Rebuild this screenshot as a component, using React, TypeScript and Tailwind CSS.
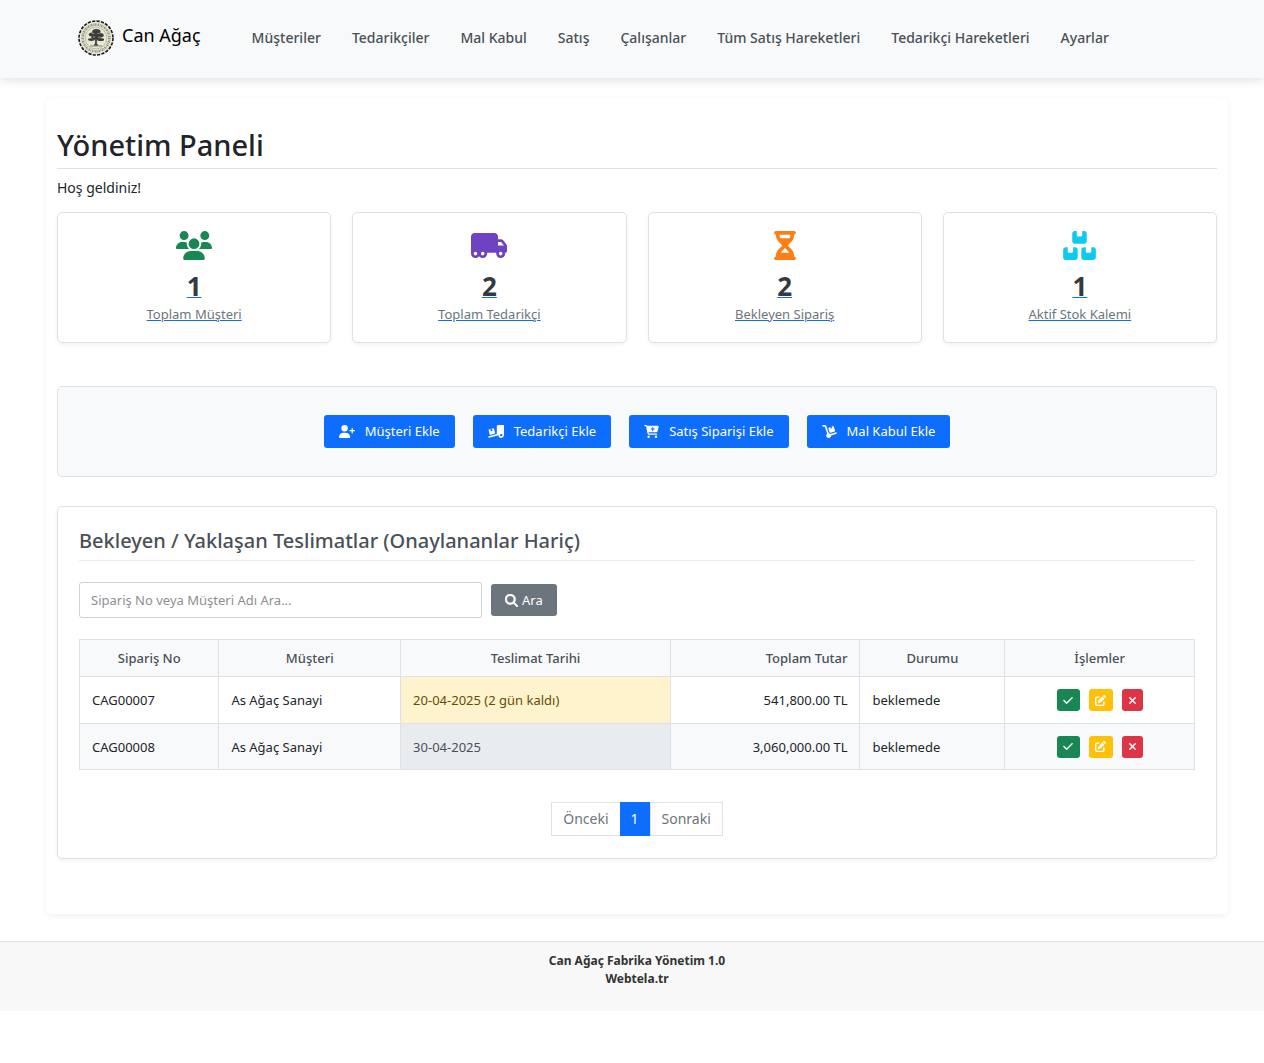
import React from "react";
import {
  FaCartPlus,
  FaCheck,
  FaDolly,
  FaHourglassHalf,
  FaMagnifyingGlass,
  FaPenToSquare,
  FaTruckMoving,
  FaTruckRampBox,
  FaUserPlus,
  FaUsers,
  FaXmark,
} from "react-icons/fa6";
import { clsx } from "clsx";

const boxShape =
  "h32v80c0 9 7 16 16 16h64c9 0 16-7 16-16v-80h32a48 48 0 0 1 48 48v128a48 48 0 0 1-48 48h-160a48 48 0 0 1-48-48v-128a48 48 0 0 1 48-48z";

// Three separate boxes, one on top of two
const BoxesIcon = ({ className }: { className?: string }) => (
  <svg viewBox="0 0 576 512" fill="currentColor" className={className} aria-hidden="true">
    <path d={`M208 0${boxShape}`} />
    <path d={`M48 288${boxShape}`} />
    <path d={`M368 288${boxShape}`} />
  </svg>
);

const navItems = [
  "Müşteriler",
  "Tedarikçiler",
  "Mal Kabul",
  "Satış",
  "Çalışanlar",
  "Tüm Satış Hareketleri",
  "Tedarikçi Hareketleri",
  "Ayarlar",
];

const stats = [
  { label: "Toplam Müşteri", value: 1, icon: FaUsers, iconClass: "w-9 text-[#198754]" },
  { label: "Toplam Tedarikçi", value: 2, icon: FaTruckMoving, iconClass: "w-9 text-[#6f42c1]" },
  { label: "Bekleyen Sipariş", value: 2, icon: FaHourglassHalf, iconClass: "w-[22px] text-[#fd7e14]" },
  { label: "Aktif Stok Kalemi", value: 1, icon: BoxesIcon, iconClass: "w-[33px] text-[#0dcaf0]" },
];

const quickActions = [
  { label: "Müşteri Ekle", icon: FaUserPlus, iconClass: "w-4" },
  { label: "Tedarikçi Ekle", icon: FaTruckRampBox, iconClass: "w-4" },
  { label: "Satış Siparişi Ekle", icon: FaCartPlus, iconClass: "w-[15px]" },
  { label: "Mal Kabul Ekle", icon: FaDolly, iconClass: "w-[15px]" },
];

const orders = [
  {
    no: "CAG00007",
    customer: "As Ağaç Sanayi",
    date: "20-04-2025 (2 gün kaldı)",
    total: "541,800.00 TL",
    status: "beklemede",
    soon: true,
  },
  {
    no: "CAG00008",
    customer: "As Ağaç Sanayi",
    date: "30-04-2025",
    total: "3,060,000.00 TL",
    status: "beklemede",
    soon: false,
  },
];

// Round seal with a tree in the middle
const Logo = () => (
  <svg viewBox="0 0 36 36" className="h-9 w-9" aria-hidden="true">
    <circle cx="18" cy="18" r="17" fill="#e9e8d3" />
    <circle cx="18" cy="18" r="17" fill="none" stroke="#1c1c1a" strokeWidth="1.6" strokeDasharray="3.2 1.25" />
    <circle cx="18" cy="18" r="13.4" fill="none" stroke="#55554c" strokeWidth="2.6" strokeDasharray="1.3 0.8 0.6 0.7" opacity="0.6" />
    <circle cx="18" cy="18" r="10.9" fill="none" stroke="#77776b" strokeWidth="0.4" />
    <g fill="#3c3d38">
      <ellipse cx="18.4" cy="11.6" rx="4.2" ry="2.6" />
      <ellipse cx="14.6" cy="14.6" rx="3.8" ry="2" />
      <ellipse cx="21.8" cy="15.2" rx="3.9" ry="2.2" />
      <ellipse cx="17.8" cy="17.2" rx="4.4" ry="2" />
      <ellipse cx="13.4" cy="19.6" rx="3.4" ry="1.4" />
      <ellipse cx="22.6" cy="19.4" rx="3.5" ry="1.5" />
      <path d="M17.1 17h1.9l-.2 6.6 1.8 2h-5.2l1.7-2z" />
    </g>
    <path d="M12 26h12" stroke="#3c3d38" strokeWidth="0.6" />
    <path d="M14 13.2l2.4.6M19.4 13.6l2.4-.4M15 16.8l2 .4M20.2 17.4l2-.4" stroke="#b9b9a6" strokeWidth="0.7" />
  </svg>
);

const Header = () => (
  <header className="bg-[#f8f9fa] shadow-[0_2px_10px_rgba(0,0,0,0.12)]">
    <div className="flex h-[78px] items-center pb-[2px] pl-[78px]">
      <a href="#" className="flex items-center gap-2 text-lg text-black">
        <Logo />
        <span className="pb-[6px]">Can Ağaç</span>
      </a>
      <nav className="ml-[51px] flex gap-[31px] text-sm font-medium whitespace-nowrap text-[#495057]">
        {navItems.map((item) => (
          <a href="#" key={item}>
            {item}
          </a>
        ))}
      </nav>
    </div>
  </header>
);

const StatCard = ({ label, value, icon: Icon, iconClass }: (typeof stats)[number]) => (
  <a
    href="#"
    className="flex flex-col items-center rounded-[5px] border border-[#dee2e6] bg-white py-[18px] shadow-[0_2px_4px_rgba(0,0,0,0.05)]"
  >
    <Icon className={clsx("h-[29px]", iconClass)} />
    <span className="mt-2 text-[26px] leading-9 font-bold text-[#343a40] underline decoration-[#0d6efd] decoration-1">
      {value}
    </span>
    <span className="text-[13px] leading-5 text-[#6c757d] underline decoration-[#0d6efd] decoration-1">{label}</span>
  </a>
);

const ActionButton = ({
  title,
  className,
  children,
}: {
  title: string;
  className: string;
  children: React.ReactNode;
}) => (
  <button
    type="button"
    aria-label={title}
    className={clsx("flex h-[22px] items-center justify-center rounded-[3px] text-white", className)}
  >
    {children}
  </button>
);

const OrdersTable = () => (
  <table className="mt-[21px] w-full table-fixed border-collapse text-[13px] leading-5 [&_td]:border [&_td]:border-[#dee2e6] [&_td]:px-3 [&_th]:border [&_th]:border-[#dee2e6] [&_th]:px-3">
    <thead className="bg-[#f8f9fa] text-[#495057]">
      <tr className="h-[37px] [&_th]:font-medium">
        <th className="w-[12.5%]">Sipariş No</th>
        <th className="w-[16.3%]">Müşteri</th>
        <th className="w-[24.2%]">Teslimat Tarihi</th>
        <th className="w-[17%] text-right">Toplam Tutar</th>
        <th className="w-[13%]">Durumu</th>
        <th>İşlemler</th>
      </tr>
    </thead>
    <tbody>
      {orders.map((order) => (
        <tr key={order.no} className="h-[47px] even:h-[46px] even:bg-[#f8f9fa]">
          <td>{order.no}</td>
          <td>{order.customer}</td>
          <td className={order.soon ? "bg-[#fff3cd] text-[#664d03]" : "bg-[#e9ecef] text-[#495057]"}>{order.date}</td>
          <td className="text-right">{order.total}</td>
          <td>{order.status}</td>
          <td>
            <div className="flex justify-center gap-[9px]">
              <ActionButton title="Onayla" className="w-[23px] bg-[#198754]">
                <FaCheck className="h-[11px] w-[10px]" />
              </ActionButton>
              <ActionButton title="Düzenle" className="w-6 bg-[#ffc107]">
                <FaPenToSquare className="h-[11px] w-[11px]" />
              </ActionButton>
              <ActionButton title="İptal" className="w-[21px] bg-[#dc3545]">
                <FaXmark className="h-[11px] w-[9px]" />
              </ActionButton>
            </div>
          </td>
        </tr>
      ))}
    </tbody>
  </table>
);

const Pagination = () => (
  <nav aria-label="Sayfalar" className="mt-8 flex justify-center text-sm leading-8 text-[#6c757d]">
    <a href="#" className="border border-r-0 border-[#dee2e6] px-[11px]">
      Önceki
    </a>
    <a href="#" aria-current="page" className="border border-[#0d6efd] bg-[#0d6efd] px-[10px] text-white">
      1
    </a>
    <a href="#" className="border border-[#dee2e6] px-[11px]">
      Sonraki
    </a>
  </nav>
);

const App = () => (
  <div className="bg-white font-['Noto_Sans',sans-serif] text-sm text-[#212529]">
    <Header />

    <main className="mt-5 mr-9 mb-[27px] ml-[46px] rounded-[5px] bg-white px-[11px] pt-[27px] pb-[55px] shadow-[0_2px_6px_rgba(0,0,0,0.06)]">
      <h1 className="border-b border-[#dee2e6] pb-[3px] text-[29px] leading-10 font-medium">Yönetim Paneli</h1>
      <p className="mt-2 leading-[22px]">Hoş geldiniz!</p>

      <div className="mt-[13px] grid grid-cols-4 gap-[21px]">
        {stats.map((stat) => (
          <StatCard key={stat.label} {...stat} />
        ))}
      </div>

      {/* Hızlı işlemler */}
      <div className="mt-[43px] flex justify-center gap-[18px] rounded-[5px] border border-[#dee2e6] bg-[#f8f9fa] py-7">
        {quickActions.map(({ label, icon: Icon, iconClass }) => (
          <button
            type="button"
            key={label}
            className="flex h-[33px] items-center gap-[10px] rounded-[3px] bg-[#0d6efd] px-[15px] text-[13px] text-white"
          >
            <Icon className={clsx("h-[13px]", iconClass)} />
            {label}
          </button>
        ))}
      </div>

      {/* Bekleyen teslimatlar */}
      <section className="mt-[29px] rounded-[5px] border border-[#dee2e6] bg-white px-[21px] pt-[19px] pb-[22px] shadow-[0_2px_4px_rgba(0,0,0,0.05)]">
        <h2 className="border-b border-[#e9ecef] pb-1 text-xl leading-[30px] font-medium text-[#495057]">
          Bekleyen / Yaklaşan Teslimatlar (Onaylananlar Hariç)
        </h2>
        <form className="mt-[21px] flex items-center gap-[9px]" onSubmit={(e) => e.preventDefault()}>
          <input
            type="text"
            aria-label="Sipariş ara"
            placeholder="Sipariş No veya Müşteri Adı Ara..."
            className="h-9 w-[403px] rounded-[3px] border border-[#ced4da] bg-white px-[11px] text-[13px] placeholder:text-[#8b8f93]"
          />
          <button
            type="submit"
            className="flex h-8 items-center gap-1 rounded-[3px] bg-[#6c757d] px-[14px] text-[13px] text-white"
          >
            <FaMagnifyingGlass className="h-[13px] w-[13px] stroke-white [stroke-width:24px]" />
            Ara
          </button>
        </form>
        <OrdersTable />
        <Pagination />
      </section>
    </main>

    <footer className="border-t border-[#dee2e6] bg-[#f8f8f8] pt-[10px] pb-[23px] pl-[10px] text-center text-xs leading-[18px] font-bold text-[#333]">
      <p>Can Ağaç Fabrika Yönetim 1.0</p>
      <p>Webtela.tr</p>
    </footer>
  </div>
);

export default App;
